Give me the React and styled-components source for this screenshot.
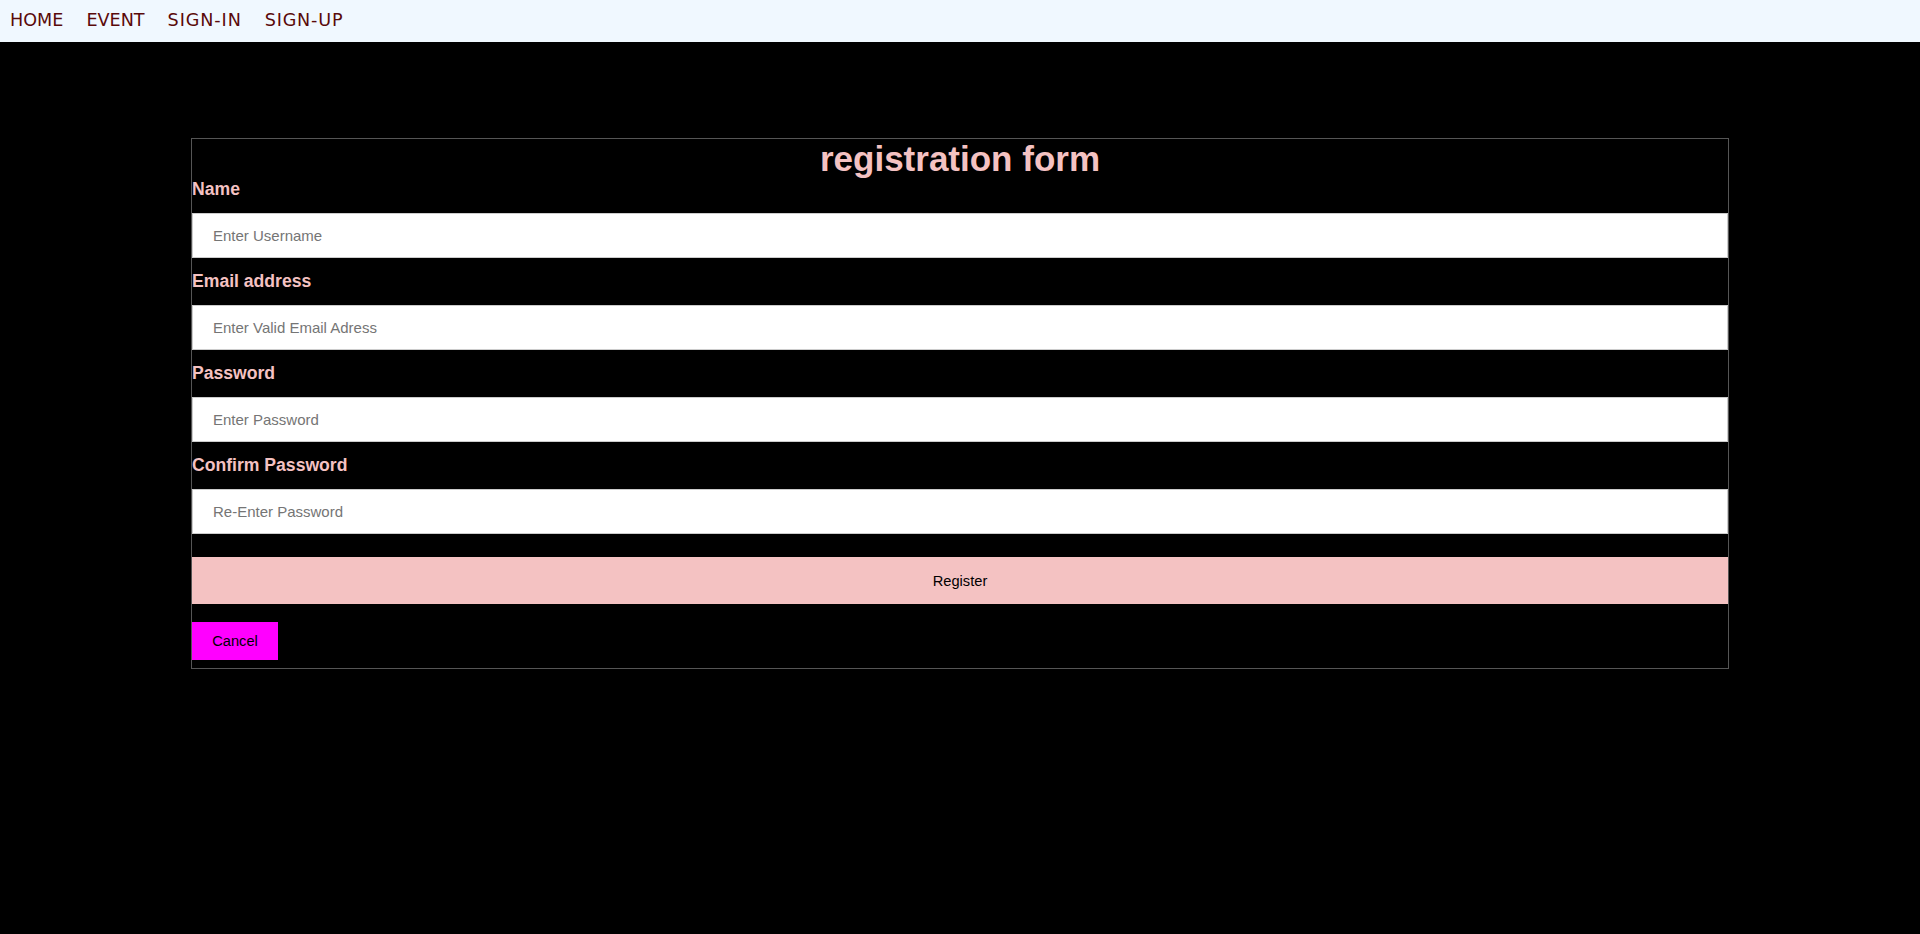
import React from 'react';
import styled, { createGlobalStyle } from 'styled-components';

const GlobalStyle = createGlobalStyle`
    html, body {
        margin: 0;
        padding: 0;
        background: #000;
        min-height: 100%;
    }
    body {
        min-height: 934px;
        font-family: "Liberation Sans", Arial, sans-serif;
    }
`;

const NavBar = styled.nav`
    /* GENERAL */
    height: 42px;
    box-sizing: border-box;
    background: aliceblue;
    padding: 10px 0 0 10px;

    /* FLEX */
    display: flex;
    gap: 23px;
`;

const NavLink = styled.a`
    font-family: "DejaVu Sans", Verdana, sans-serif;
    font-size: 17.6px;
    line-height: 20px;
    letter-spacing: ${(props) => props.$spacing || 0}px;
    color: #5a0a0a;
    text-decoration: none;
    cursor: pointer;
`;

const FormBox = styled.form`
    width: 1536px;
    margin: 96px auto 0;
    border: 1px solid #555;
    padding-bottom: 8px;
    display: flex;
    flex-direction: column;
    align-items: stretch;
`;

const Title = styled.h1`
    margin: 0;
    font-size: 35px;
    line-height: 40px;
    font-weight: bold;
    text-align: center;
    color: #f4c2c2;
`;

const Label = styled.label`
    display: block;
    font-size: 17.6px;
    line-height: 20px;
    font-weight: bold;
    color: #f4c2c2;
    margin-bottom: 14px;
`;

const Input = styled.input`
    display: block;
    width: 100%;
    height: 45px;
    box-sizing: border-box;
    margin: 0 0 13px;
    padding: 0 20px;
    border: 1px solid #ccc;
    background: #fff;
    font-family: "Liberation Sans", Arial, sans-serif;
    font-size: 15px;
    outline: none;
    &::placeholder {
        color: #757575;
    }
`;

const Button = styled.button`
    display: block;
    border: none;
    padding: 0;
    font-family: "Liberation Sans", Arial, sans-serif;
    font-size: 14.67px;
    color: #000;
    cursor: pointer;
    &.register{
        width: 100%;
        height: 47px;
        margin-top: 10px;
        background: #f4c2c2;
    }
    &.cancel{
        width: 86px;
        height: 38px;
        margin-top: 18px;
        background: #ff00ff;
    }
`;

const links = [
    { text: "HOME" },
    { text: "EVENT" },
    { text: "SIGN-IN", spacing: 0.9 },
    { text: "SIGN-UP", spacing: 0.8 },
];

const fields = [
    { label: "Name", type: "text", placeholder: "Enter Username" },
    { label: "Email address", type: "email", placeholder: "Enter Valid Email Adress" },
    { label: "Password", type: "password", placeholder: "Enter Password" },
    { label: "Confirm Password", type: "password", placeholder: "Re-Enter Password" },
];

const App = () => {
    return(
        <>
            <GlobalStyle />
            <NavBar>
                { links.map((l) => (
                    <NavLink key={l.text} $spacing={l.spacing}>{l.text}</NavLink>
                ))}
            </NavBar>
            <FormBox onSubmit={(e) => e.preventDefault()}>
                <Title>registration form</Title>
                { fields.map((f) => (
                    <React.Fragment key={f.label}>
                        <Label>{f.label}</Label>
                        <Input type={f.type} placeholder={f.placeholder} />
                    </React.Fragment>
                ))}
                <Button type="submit" className={"register"}>Register</Button>
                <Button type="button" className={"cancel"}>Cancel</Button>
            </FormBox>
        </>
    )
}

export default App;
